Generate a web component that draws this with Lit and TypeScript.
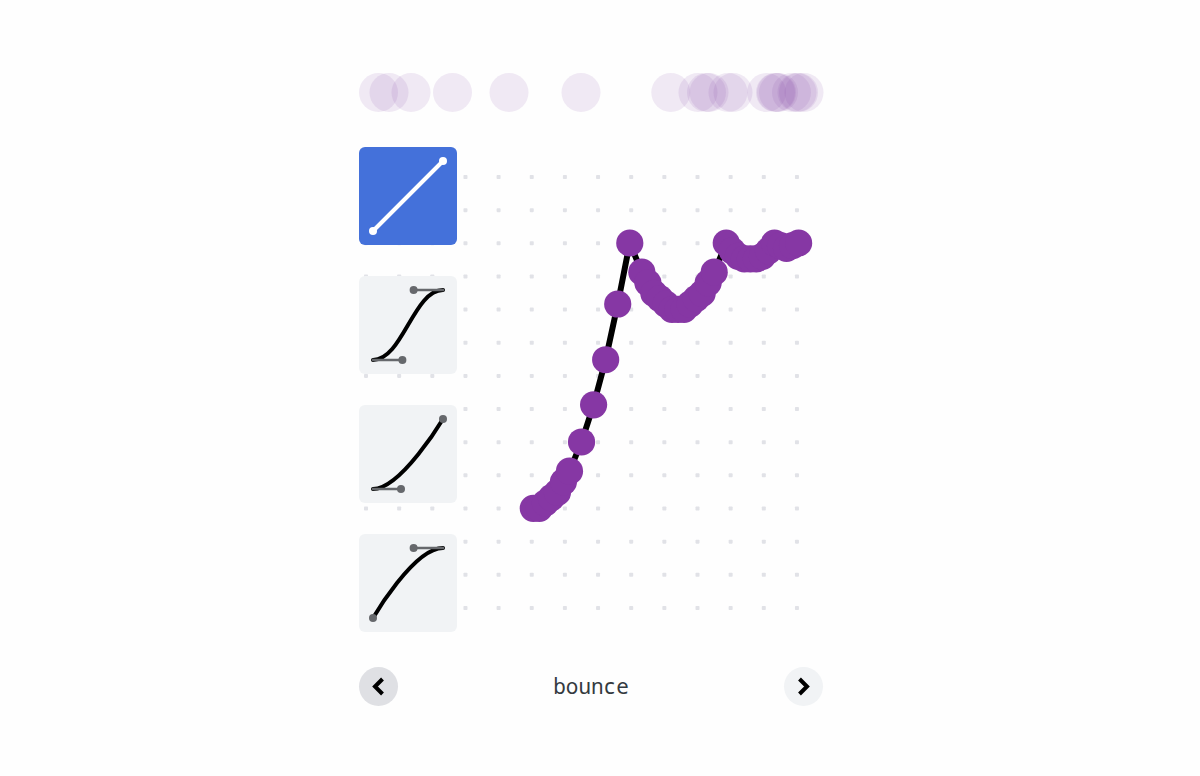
import { LitElement, html, svg, css } from "lit";
import { customElement, state } from "lit/decorators.js";

const GHOSTS = [378.5, 389, 411, 452.5, 509, 581, 670.8, 698, 706.5, 709, 728, 733, 766.5, 775.5, 776.5, 778.5, 791.5, 797, 798.5, 804];

const BOUNCE: [number, number][] = [
  [0, 0], [1, 0], [2, 0.02], [3, 0.04], [4, 0.06], [5, 0.1], [6, 0.14],
  [8, 0.25], [10, 0.39], [12, 0.56], [14, 0.77], [16, 1],
  [18, 0.89], [19, 0.85], [20, 0.81], [21, 0.79], [22, 0.77], [23, 0.75], [24, 0.75],
  [25, 0.75], [26, 0.77], [27, 0.79], [28, 0.81], [29, 0.85], [30, 0.89],
  [32, 1], [33, 0.97], [34, 0.95], [35, 0.94], [36, 0.94], [37, 0.94], [38, 0.95], [39, 0.97],
  [40, 1], [41, 0.99], [42, 0.98], [43, 0.99], [44, 1],
];

const PRESETS = [
  { name: "linear", x1: 0, y1: 0, x2: 1, y2: 1 },
  { name: "ease-in-out", x1: 0.42, y1: 0, x2: 0.58, y2: 1 },
  { name: "ease-in", x1: 0.4, y1: 0, x2: 1, y2: 1 },
  { name: "ease-out", x1: 0, y1: 0, x2: 0.58, y2: 1 },
];

@customElement("app-root")
export class AppRoot extends LitElement {
  @state() private selected = 0;

  static styles = css`
    :host {
      display: flex;
      justify-content: center;
      align-items: center;
      min-height: 100vh;
      box-sizing: border-box;
      padding: 20px 26px 18px 8px;
      background: #fefefe;
      color: #343a40;
      font-family: "Noto Sans Mono", "DejaVu Sans Mono", monospace;
    }
    main {
      width: 100%;
      max-width: 465px;
      display: flex;
      flex-direction: column;
      gap: 35px;
    }
    svg { display: block; overflow: visible; }
    .track { width: 100%; height: auto; }
    .track circle { fill: #8040a4; fill-opacity: 0.11; }
    .stage { display: grid; }
    .presets, .plot { grid-area: 1 / 1; }
    .plot { width: 100%; height: auto; }
    .dot { fill: #e1e2e7; }
    .curve { fill: none; stroke: #000; stroke-width: 6; stroke-linejoin: round; }
    .point { fill: #8637a4; }
    .presets {
      position: relative;
      display: flex;
      flex-direction: column;
      justify-content: space-between;
      justify-self: start;
    }
    button { border: 0; padding: 0; margin: 0; cursor: pointer; color: #000; background: #f1f3f5; }
    .preset { width: 98px; height: 98px; border-radius: 6px; }
    .preset .line { fill: none; stroke: #000; stroke-width: 4; stroke-linecap: round; }
    .preset .arm { stroke: #66686c; stroke-width: 2.4; stroke-linecap: round; }
    .preset .knob { fill: #66686c; }
    .preset.selected { background: #4471da; }
    .selected .line, .selected .arm { stroke: #fff; }
    .selected .knob { fill: #fff; }
    footer { display: flex; align-items: center; justify-content: space-between; }
    .name { font-size: 21px; line-height: 28px; }
    .nav {
      width: 39px;
      height: 39px;
      border-radius: 50%;
      display: grid;
      place-items: center;
    }
    .nav.prev { background: #dfe0e4; }
    .nav path { fill: none; stroke: #000; stroke-width: 4; }
  `;

  private grid() {
    const dots = [];
    for (let r = 0; r < 14; r++)
      for (let c = 0; c < 14; c++)
        dots.push(svg`<rect class="dot" x=${5 + c * 33.15} y=${28 + r * 33.15} width="4" height="4" rx="0.8"/>`);
    return dots;
  }

  private preset(p: (typeof PRESETS)[number], i: number) {
    const X = (v: number) => 14 + v * 70;
    const Y = (v: number) => 84 - v * 70;
    return html`<button
      class="preset ${i === this.selected ? "selected" : ""}"
      aria-label=${p.name}
      aria-pressed=${i === this.selected}
      @click=${() => (this.selected = i)}
    >
      <svg width="98" height="98" viewBox="0 0 98 98" aria-hidden="true">
        <path class="line" d="M14 84C${X(p.x1)} ${Y(p.y1)} ${X(p.x2)} ${Y(p.y2)} 84 14"/>
        <path class="arm" d="M14 84L${X(p.x1)} ${Y(p.y1)}M84 14L${X(p.x2)} ${Y(p.y2)}"/>
        <circle class="knob" cx=${X(p.x1)} cy=${Y(p.y1)} r="4"/>
        <circle class="knob" cx=${X(p.x2)} cy=${Y(p.y2)} r="4"/>
      </svg>
    </button>`;
  }

  render() {
    const pts = BOUNCE.map(([x, y]) => [174.3 + x * 6.03, 361.3 - y * 265.3]);
    return html`<main>
      <svg class="track" viewBox="0 0 465 39" aria-hidden="true">
        ${GHOSTS.map((x) => svg`<circle cx=${x - 359} cy="19.5" r="19.5"/>`)}
      </svg>
      <div class="stage">
        <svg class="plot" viewBox="0 0 465 485" role="img" aria-label="Easing curve">
          ${this.grid()}
          <polyline class="curve" points=${pts.map((p) => p.join(",")).join(" ")}/>
          ${pts.map(([x, y]) => svg`<circle class="point" cx=${x} cy=${y} r="13.6"/>`)}
        </svg>
        <div class="presets">${PRESETS.map((p, i) => this.preset(p, i))}</div>
      </div>
      <footer>
        <button class="nav prev" aria-label="Previous">
          <svg width="39" height="39" viewBox="0 0 39 39" aria-hidden="true"><path d="M23.5 12L16 19.5L23.5 27"/></svg>
        </button>
        <span class="name">bounce</span>
        <button class="nav" aria-label="Next">
          <svg width="39" height="39" viewBox="0 0 39 39" aria-hidden="true"><path d="M15.5 12L23 19.5L15.5 27"/></svg>
        </button>
      </footer>
    </main>`;
  }
}
